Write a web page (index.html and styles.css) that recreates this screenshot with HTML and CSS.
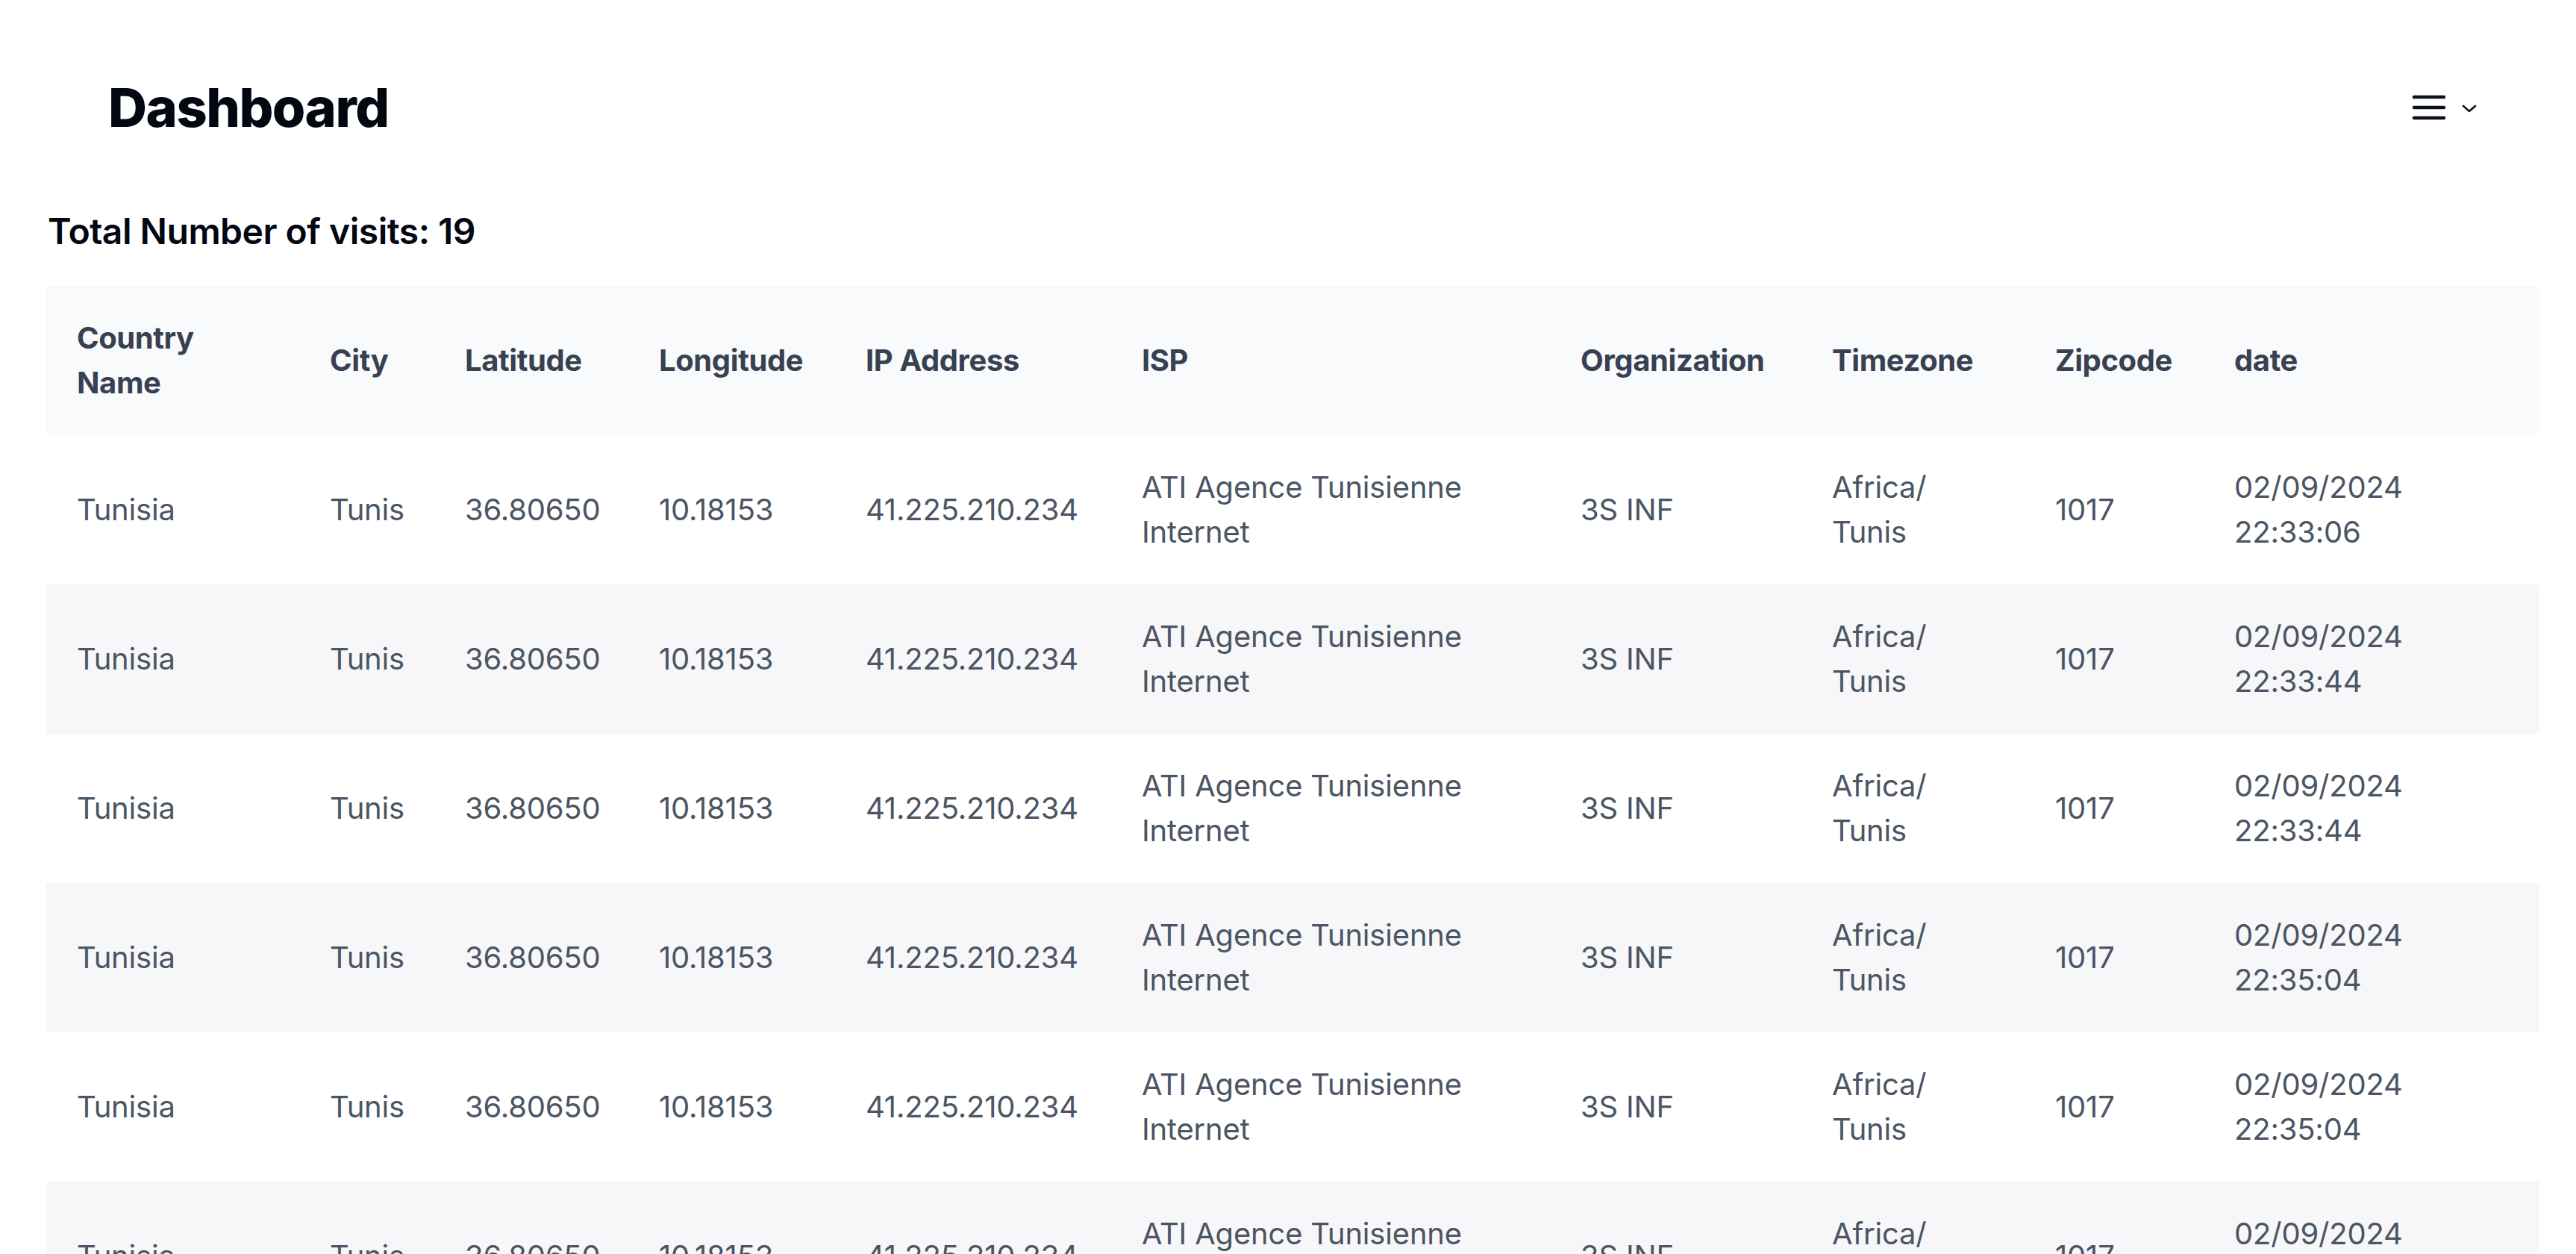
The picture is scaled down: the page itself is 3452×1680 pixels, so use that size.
FILE: index.html
```html
<!DOCTYPE html>
<html lang="en">
<head>
<meta charset="utf-8">
<title>Dashboard</title>
<link rel="stylesheet" href="styles.css">
</head>
<body>
<div class="page">
  <header class="topbar">
    <h1 class="title">Dashboard</h1>
    <button class="menu" type="button" aria-label="Menu">
      <svg class="burger" width="48" height="34" viewBox="0 0 48 34"><path d="M4 3H44M4 17H44M4 31H44" stroke="#0b1020" stroke-width="4.5" stroke-linecap="round" fill="none"/></svg>
      <svg class="chev" width="20" height="11" viewBox="0 0 20 11"><path d="M2 2L10 9L18 2" stroke="#0b1020" stroke-width="2.6" fill="none" stroke-linecap="round" stroke-linejoin="round"/></svg>
    </button>
  </header>

  <h2 class="total">Total Number of visits: 19</h2>

  <table class="visits">
    <colgroup>
      <col class="c-country"><col class="c-city"><col class="c-lat"><col class="c-lon"><col class="c-ip"><col class="c-isp"><col class="c-org"><col class="c-tz"><col class="c-zip"><col class="c-date">
    </colgroup>
    <thead>
      <tr>
        <th class="wrap-country">Country Name</th><th>City</th><th>Latitude</th><th>Longitude</th><th>IP Address</th><th>ISP</th><th>Organization</th><th class="wrap-tz">Timezone</th><th>Zipcode</th><th class="wrap-date">date</th>
      </tr>
    </thead>
    <tbody>
      <tr><td class="wrap-country">Tunisia</td><td>Tunis</td><td>36.80650</td><td>10.18153</td><td>41.225.210.234</td><td>ATI Agence Tunisienne Internet</td><td>3S INF</td><td class="wrap-tz">Africa/<wbr>Tunis</td><td>1017</td><td class="wrap-date">02/09/2024 22:33:06</td></tr>
      <tr><td class="wrap-country">Tunisia</td><td>Tunis</td><td>36.80650</td><td>10.18153</td><td>41.225.210.234</td><td>ATI Agence Tunisienne Internet</td><td>3S INF</td><td class="wrap-tz">Africa/<wbr>Tunis</td><td>1017</td><td class="wrap-date">02/09/2024 22:33:44</td></tr>
      <tr><td class="wrap-country">Tunisia</td><td>Tunis</td><td>36.80650</td><td>10.18153</td><td>41.225.210.234</td><td>ATI Agence Tunisienne Internet</td><td>3S INF</td><td class="wrap-tz">Africa/<wbr>Tunis</td><td>1017</td><td class="wrap-date">02/09/2024 22:33:44</td></tr>
      <tr><td class="wrap-country">Tunisia</td><td>Tunis</td><td>36.80650</td><td>10.18153</td><td>41.225.210.234</td><td>ATI Agence Tunisienne Internet</td><td>3S INF</td><td class="wrap-tz">Africa/<wbr>Tunis</td><td>1017</td><td class="wrap-date">02/09/2024 22:35:04</td></tr>
      <tr><td class="wrap-country">Tunisia</td><td>Tunis</td><td>36.80650</td><td>10.18153</td><td>41.225.210.234</td><td>ATI Agence Tunisienne Internet</td><td>3S INF</td><td class="wrap-tz">Africa/<wbr>Tunis</td><td>1017</td><td class="wrap-date">02/09/2024 22:35:04</td></tr>
      <tr><td class="wrap-country">Tunisia</td><td>Tunis</td><td>36.80650</td><td>10.18153</td><td>41.225.210.234</td><td>ATI Agence Tunisienne Internet</td><td>3S INF</td><td class="wrap-tz">Africa/<wbr>Tunis</td><td>1017</td><td class="wrap-date">02/09/2024 22:36:12</td></tr>
      <tr><td class="wrap-country">Tunisia</td><td>Tunis</td><td>36.80650</td><td>10.18153</td><td>41.225.210.234</td><td>ATI Agence Tunisienne Internet</td><td>3S INF</td><td class="wrap-tz">Africa/<wbr>Tunis</td><td>1017</td><td class="wrap-date">02/09/2024 22:36:12</td></tr>
      <tr><td class="wrap-country">Tunisia</td><td>Tunis</td><td>36.80650</td><td>10.18153</td><td>41.225.210.234</td><td>ATI Agence Tunisienne Internet</td><td>3S INF</td><td class="wrap-tz">Africa/<wbr>Tunis</td><td>1017</td><td class="wrap-date">02/09/2024 22:40:27</td></tr>
    </tbody>
  </table>
</div>
</body>
</html>
```

FILE: styles.css
```css
html, body {
  margin: 0;
  padding: 0;
  background: #ffffff;
}

body {
  font-family: Inter, "Noto Sans", "Liberation Sans", sans-serif;
  color: #374151;
}

.page {
  padding: 0 49px 0 62px;
}

.topbar {
  display: flex;
  align-items: center;
  justify-content: space-between;
  height: 200px;
  margin-top: 44px;
  padding: 0 84px 0 83px;
}

.title {
  margin: 0;
  font-size: 72px;
  font-weight: 800;
  letter-spacing: -1.5px;
  color: #030712;
  line-height: 1;
}

.menu {
  display: flex;
  align-items: center;
  gap: 20px;
  background: none;
  border: 0;
  padding: 0;
  cursor: pointer;
}

.burger { display: block; }
.chev { display: block; margin-top: 3px; }

.total {
  margin: 37px 0 0 2px;
  font-size: 48px;
  font-weight: 600;
  letter-spacing: -0.5px;
  color: #030712;
  line-height: 57px;
}

.visits {
  margin-top: 45px;
  width: 3341px;
  border-collapse: collapse;
  table-layout: fixed;
}

.c-country { width: 339px; }
.c-city { width: 181px; }
.c-lat { width: 260px; }
.c-lon { width: 277px; }
.c-ip { width: 370px; }
.c-isp { width: 588px; }
.c-org { width: 337px; }
.c-tz { width: 299px; }
.c-zip { width: 240px; }
.c-date { width: 450px; }

.visits th,
.visits td {
  text-align: left;
  vertical-align: middle;
  padding: 40px 16px 40px 41px;
  line-height: 60px;
  height: 120px;
}

.visits .wrap-country { padding-right: 60px; }
.visits .wrap-tz { padding-right: 50px; }
.visits .wrap-date { padding-right: 60px; }

.visits thead tr {
  background: #f9fafb;
}

.visits th {
  font-size: 40px;
  font-weight: 700;
  color: #374151;
  letter-spacing: -0.4px;
}

.visits td {
  font-size: 40px;
  font-weight: 400;
  color: #4b5563;
  letter-spacing: -0.2px;
}

.visits tbody tr:nth-child(even) {
  background: #f7f7f9;
}
```
